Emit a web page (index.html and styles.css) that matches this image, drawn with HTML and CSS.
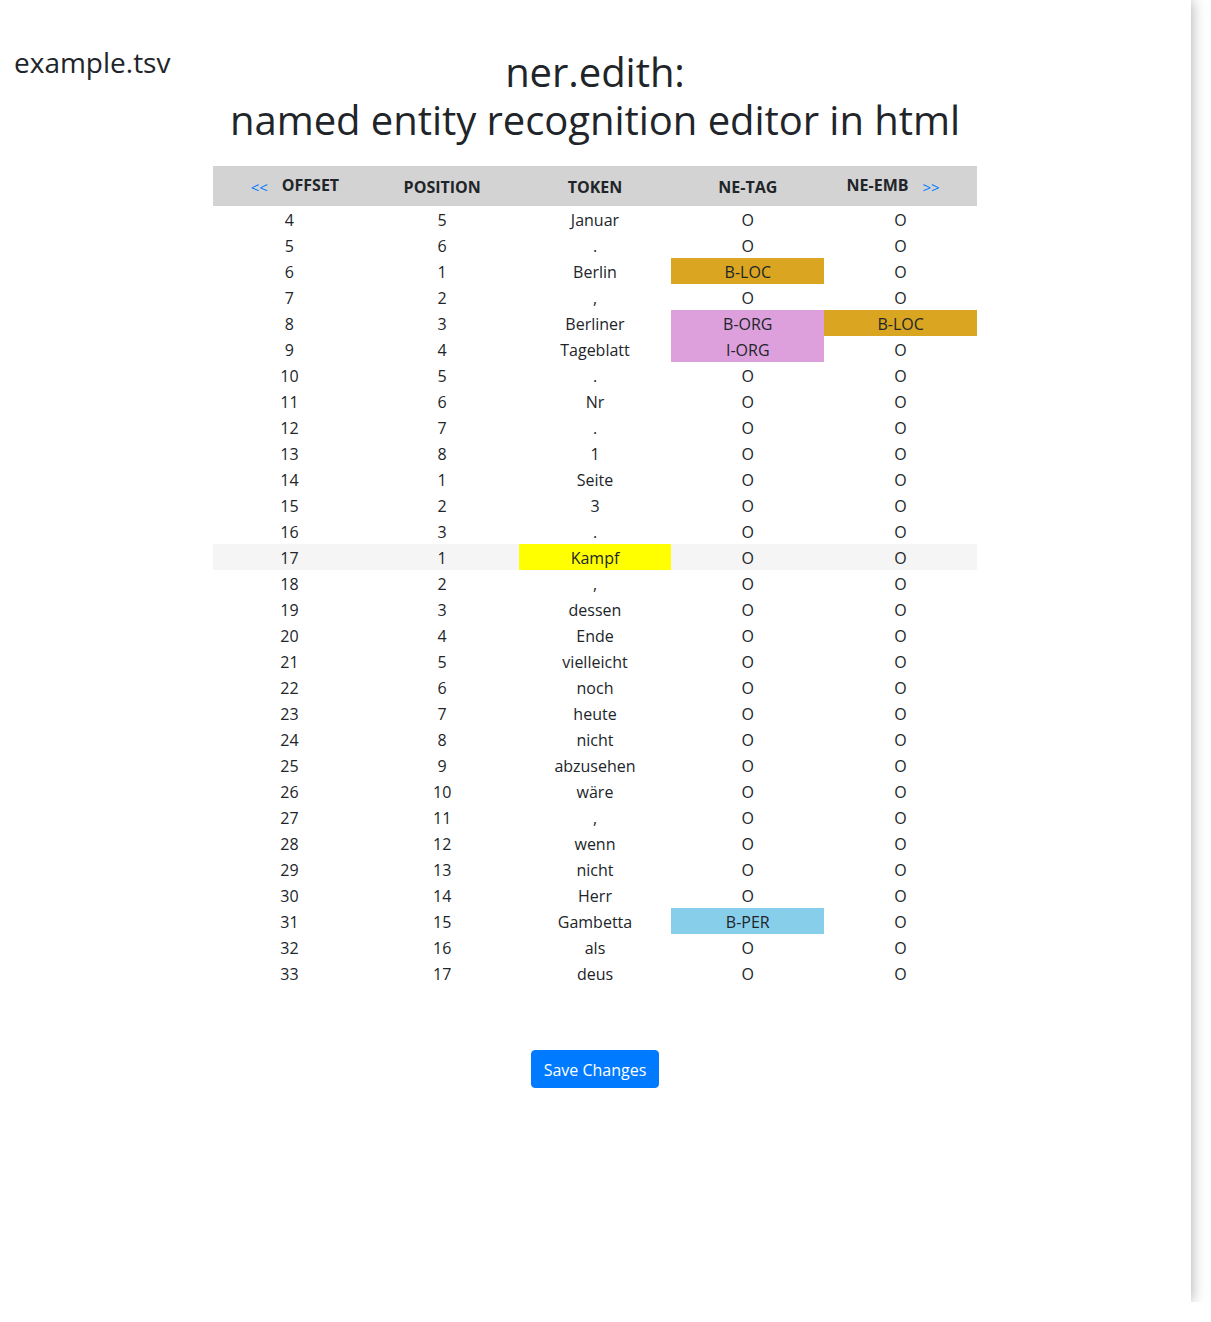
FILE: index.html
```html
<!DOCTYPE html>
<html>
<head>
<meta charset="utf-8">
<title>ner.edith</title>
<link rel="stylesheet" href="styles.css">
</head>
<body>
<div class="page">
  <div class="top">
    <div class="filename">example.tsv</div>
    <h1 class="title"><span class="line">ner.edith:</span><span class="line">named entity recognition editor in html</span></h1>
    <div></div>
  </div>
  <table class="grid">
    <thead>
      <tr>
        <th><span class="nav">&lt;&lt;</span><span class="hd up">OFFSET</span></th>
        <th>POSITION</th>
        <th>TOKEN</th>
        <th>NE-TAG</th>
        <th><span class="hd up">NE-EMB</span><span class="nav">&gt;&gt;</span></th>
      </tr>
    </thead>
    <tbody>
      <tr><td>4</td><td>5</td><td>Januar</td><td>O</td><td>O</td></tr>
      <tr><td>5</td><td>6</td><td>.</td><td>O</td><td>O</td></tr>
      <tr><td>6</td><td>1</td><td>Berlin</td><td class="loc">B-LOC</td><td>O</td></tr>
      <tr><td>7</td><td>2</td><td>,</td><td>O</td><td>O</td></tr>
      <tr><td>8</td><td>3</td><td>Berliner</td><td class="org">B-ORG</td><td class="loc">B-LOC</td></tr>
      <tr><td>9</td><td>4</td><td>Tageblatt</td><td class="org">I-ORG</td><td>O</td></tr>
      <tr><td>10</td><td>5</td><td>.</td><td>O</td><td>O</td></tr>
      <tr><td>11</td><td>6</td><td>Nr</td><td>O</td><td>O</td></tr>
      <tr><td>12</td><td>7</td><td>.</td><td>O</td><td>O</td></tr>
      <tr><td>13</td><td>8</td><td>1</td><td>O</td><td>O</td></tr>
      <tr><td>14</td><td>1</td><td>Seite</td><td>O</td><td>O</td></tr>
      <tr><td>15</td><td>2</td><td>3</td><td>O</td><td>O</td></tr>
      <tr><td>16</td><td>3</td><td>.</td><td>O</td><td>O</td></tr>
      <tr class="current"><td>17</td><td>1</td><td class="sel">Kampf</td><td>O</td><td>O</td></tr>
      <tr><td>18</td><td>2</td><td>,</td><td>O</td><td>O</td></tr>
      <tr><td>19</td><td>3</td><td>dessen</td><td>O</td><td>O</td></tr>
      <tr><td>20</td><td>4</td><td>Ende</td><td>O</td><td>O</td></tr>
      <tr><td>21</td><td>5</td><td>vielleicht</td><td>O</td><td>O</td></tr>
      <tr><td>22</td><td>6</td><td>noch</td><td>O</td><td>O</td></tr>
      <tr><td>23</td><td>7</td><td>heute</td><td>O</td><td>O</td></tr>
      <tr><td>24</td><td>8</td><td>nicht</td><td>O</td><td>O</td></tr>
      <tr><td>25</td><td>9</td><td>abzusehen</td><td>O</td><td>O</td></tr>
      <tr><td>26</td><td>10</td><td>wäre</td><td>O</td><td>O</td></tr>
      <tr><td>27</td><td>11</td><td>,</td><td>O</td><td>O</td></tr>
      <tr><td>28</td><td>12</td><td>wenn</td><td>O</td><td>O</td></tr>
      <tr><td>29</td><td>13</td><td>nicht</td><td>O</td><td>O</td></tr>
      <tr><td>30</td><td>14</td><td>Herr</td><td>O</td><td>O</td></tr>
      <tr><td>31</td><td>15</td><td>Gambetta</td><td class="per">B-PER</td><td>O</td></tr>
      <tr><td>32</td><td>16</td><td>als</td><td>O</td><td>O</td></tr>
      <tr><td>33</td><td>17</td><td>deus</td><td>O</td><td>O</td></tr>
    </tbody>
  </table>
  <div class="actions">
    <button class="save" type="button">Save Changes</button>
  </div>
</div>
</body>
</html>
```

FILE: styles.css
```css
html, body {
  margin: 0;
  padding: 0;
  background: #ffffff;
}

body {
  font-family: "Open Sans", "Liberation Sans", sans-serif;
  color: #212529;
  font-size: 16px;
}

.page {
  width: 1191px;
  height: 1302px;
  background: #ffffff;
  box-shadow: 0 0 14px rgba(0, 0, 0, 0.35);
  box-sizing: border-box;
  padding-top: 46px;
  padding-right: 1px;
}

.top {
  display: grid;
  grid-template-columns: 1fr auto 1fr;
  align-items: start;
}

.filename {
  font-size: 28px;
  line-height: 34px;
  padding-left: 14px;
  margin-top: -1px;
}

.title {
  margin: 2px 0 0 0;
  font-size: 40px;
  font-weight: 400;
  line-height: 48px;
  text-align: center;
  letter-spacing: -0.05px;
}

.title .line {
  display: block;
}

.grid {
  margin: 22px auto 0 auto;
  width: 764px;
  border-collapse: collapse;
  table-layout: fixed;
}

.grid th {
  background: #d3d3d3;
  height: 40px;
  box-sizing: border-box;
  padding: 2px 0 0 0;
  font-weight: 700;
  font-size: 16px;
  text-align: center;
  vertical-align: middle;
}

.grid th .hd.up {
  position: relative;
  top: -2px;
}

.grid th:first-child {
  padding-right: 3px;
}

.grid th:last-child {
  padding-right: 1px;
}

.nav {
  color: #007bff;
  font-weight: 400;
  font-size: 15px;
  margin: 0 14px;
}

.grid td {
  padding: 2px 0 0 0;
  height: 26px;
  box-sizing: border-box;
  line-height: 24px;
  text-align: center;
  font-size: 16px;
}

.grid tr.current td {
  background: #f5f5f5;
}

.grid td.loc {
  background: #daa520;
}

.grid td.org {
  background: #dda0dd;
}

.grid td.per {
  background: #87ceeb;
}

.grid tr.current td.sel {
  background: #ffff00;
}

.actions {
  display: flex;
  justify-content: center;
  margin-top: 64px;
}

.save {
  font-family: "Open Sans", "Liberation Sans", sans-serif;
  font-size: 16px;
  line-height: 24px;
  color: #ffffff;
  background: #007bff;
  border: 1px solid #007bff;
  border-radius: 4px;
  padding: 7px 12px 5px 12px;
  cursor: pointer;
}
```
